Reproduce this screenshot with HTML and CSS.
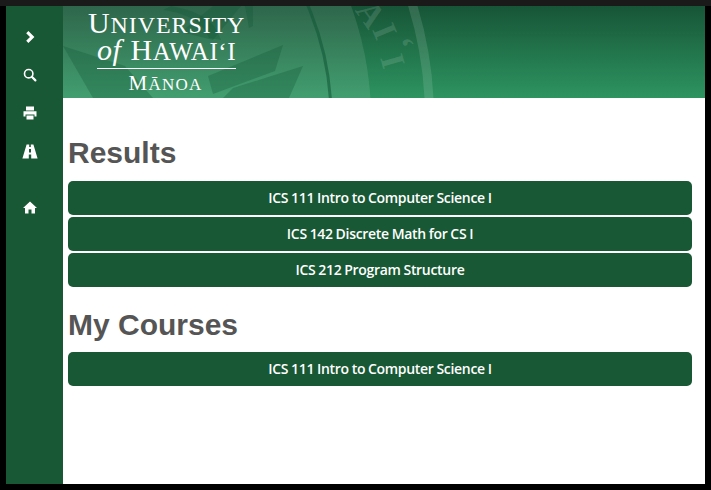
FILE: index.html
```html
<!DOCTYPE html>
<html lang="en">
<head>
  <meta charset="UTF-8">
  <title>Course Search</title>
  <meta name="viewport" content="width=device-width, initial-scale=1.0">
  <link rel="stylesheet" href="styles.css">
</head>
<body>

  <div class="window">
    <nav class="sidebar">
      <a class="nav-icon" href="#">
        <svg width="12" height="14" viewBox="0 0 12 14"><path d="M2.2 3.2 L4.4 1 L10.4 7 L4.4 13 L2.2 10.8 L6 7 Z" fill="#fff"/></svg>
      </a>
      <a class="nav-icon" href="#">
        <svg width="14" height="14" viewBox="0 0 14 14"><circle cx="5.7" cy="5.7" r="4.2" fill="none" stroke="#fff" stroke-width="1.6"/><path d="M8.8 8.8 L12.4 12.4" stroke="#fff" stroke-width="2.2" stroke-linecap="round"/></svg>
      </a>
      <a class="nav-icon" href="#">
        <svg width="14" height="14" viewBox="0 0 14 14"><path d="M3 0.5 H11 V4.5 H3 Z M0.5 5.3 H13.5 V10.5 H11.5 V8.5 H2.5 V10.5 H0.5 Z M3.5 9.5 H10.5 V13.5 H3.5 Z" fill="#fff"/></svg>
      </a>
      <a class="nav-icon" href="#">
        <svg width="16" height="15" viewBox="0 0 16 15"><path d="M4.6 0.5 H7.2 V3 H8.8 V0.5 H11.4 L15.6 14.5 H9.2 V10.5 H6.8 V14.5 H0.4 Z M7 5 V8.5 H9 V5 Z" fill="#fff" fill-rule="evenodd"/></svg>
      </a>
      <a class="nav-icon nav-home" href="#">
        <svg width="14" height="13" viewBox="0 0 14 13"><path d="M7 0.5 L14 7 H12 V12.5 H8.5 V8.5 H5.5 V12.5 H2 V7 H0 Z" fill="#fff"/></svg>
      </a>
    </nav>

    <div class="page">
      <header class="banner">
        <!-- seal behind the logo, centre sits left of the banner -->
        <svg class="seal" width="642" height="92" viewBox="0 0 642 92">
          <circle cx="-17" cy="112" r="383.5" fill="none" stroke="#fff" stroke-opacity="0.12" stroke-width="9"/>
          <circle cx="-17" cy="112" r="325" fill="#fff" fill-opacity="0.1"/>
          <circle cx="-17" cy="112" r="285" fill="none" stroke="#0f5535" stroke-opacity="0.55" stroke-width="3"/>
          <g fill="#0f5535" fill-opacity="0.3">
            <path d="M220 39 L212 65 L150 88 L145 70 Z"/>
            <path d="M240 60 L226 92 L160 92 L170 82 Z"/>
            <path d="M178 0 L150 0 L118 26 L150 34 Z"/>
            <path d="M0 40 L62 60 L90 92 L30 92 Z"/>
            <path d="M108 0 C140 6 152 16 158 34 L146 32 C140 18 128 8 100 4 Z"/>
            <path d="M190 0 L182 0 L186 22 L190 20 Z"/>
          </g>
          <g class="seal-text">
            <text transform="translate(308 8) rotate(55)">A</text>
            <text transform="translate(322 25) rotate(67)">I</text>
            <text transform="translate(339 38) rotate(70)">‘</text>
            <text transform="translate(330 55) rotate(74)">I</text>
          </g>
        </svg>
        <div class="logo">
          <div class="logo-top"><span class="logo-cap">U</span>NIVERSITY</div>
          <div class="logo-mid"><i>of</i> <span class="logo-cap">H</span>AWAI‘I</div>
          <div class="logo-sub"><span class="logo-cap">M</span>ĀNOA</div>
        </div>
      </header>

      <main class="content">
        <h2>Results</h2>
        <div class="course-list">
          <a class="course" href="#">ICS 111 Intro to Computer Science I</a>
          <a class="course" href="#">ICS 142 Discrete Math for CS I</a>
          <a class="course" href="#">ICS 212 Program Structure</a>
        </div>

        <h2>My Courses</h2>
        <div class="course-list">
          <a class="course" href="#">ICS 111 Intro to Computer Science I</a>
        </div>
      </main>
    </div>
  </div>

</body>
</html>
```

FILE: styles.css
```css
body {
  margin: 0;
  background-color: #000;
  font-family: "Liberation Sans", Arial, sans-serif;
}

.window {
  display: flex;
  height: 490px;
  box-sizing: border-box;
  padding: 6px;
  background: linear-gradient(#1a1a1a 6px, #000 6px);
}

.sidebar {
  display: flex;
  flex-direction: column;
  align-items: center;
  width: 47px;
  padding: 12px 10px 0 0;
  background-color: #185834;
}

.nav-icon {
  display: flex;
  align-items: center;
  justify-content: center;
  height: 38px;
}

.nav-home {
  margin-top: 18px;
}

.page {
  flex: 1;
  display: flex;
  flex-direction: column;
  background-color: #fff;
}

.banner {
  position: relative;
  height: 92px;
  overflow: hidden;
  background: linear-gradient(#175537, #2d9460);
}

.seal {
  position: absolute;
  left: 0;
  top: 0;
}

.seal-text text {
  font-family: "Liberation Serif", serif;
  font-size: 34px;
  font-weight: bold;
  fill: #fff;
  fill-opacity: 0.13;
  text-anchor: middle;
  dominant-baseline: central;
}

.logo {
  position: relative;
  width: 155px;
  margin-left: 25px;
  padding-top: 5px;
  color: #fff;
  font-family: "Liberation Serif", serif;
  text-align: center;
  white-space: nowrap;
}

.logo-cap,
.logo i {
  line-height: 0;
}

.logo-top {
  font-size: 24px;
  line-height: 29px;
  letter-spacing: 0.9px;
}

.logo-top .logo-cap {
  font-size: 30px;
}

.logo-mid {
  width: 139px;
  margin-left: 9px;
  padding-bottom: 4px;
  border-bottom: 1px solid #fff;
  font-size: 25px;
  line-height: 24px;
  letter-spacing: 0.6px;
}

.logo-mid .logo-cap {
  font-size: 30px;
}

.logo-mid i {
  font-size: 30px;
  margin-right: 2px;
}

.logo-sub {
  padding-top: 3px;
  font-size: 17px;
  line-height: 26px;
  letter-spacing: 1.2px;
}

.logo-sub .logo-cap {
  font-size: 21px;
}

.content {
  padding: 38px 13px 0 5px;
}

h2 {
  margin: 0 0 12px;
  font-size: 30px;
  line-height: 33px;
  color: #555;
}

.course-list + h2 {
  margin-bottom: 11px;
}

.course-list {
  display: flex;
  flex-direction: column;
  gap: 2px;
  margin-bottom: 21px;
}

.course {
  height: 34px;
  line-height: 34px;
  border-radius: 5px;
  background-color: #185834;
  color: #fff;
  font-family: "Open Sans", sans-serif;
  font-size: 14px;
  font-weight: 600;
  letter-spacing: -0.3px;
  word-spacing: -0.5px;
  text-align: center;
  text-decoration: none;
}
```
